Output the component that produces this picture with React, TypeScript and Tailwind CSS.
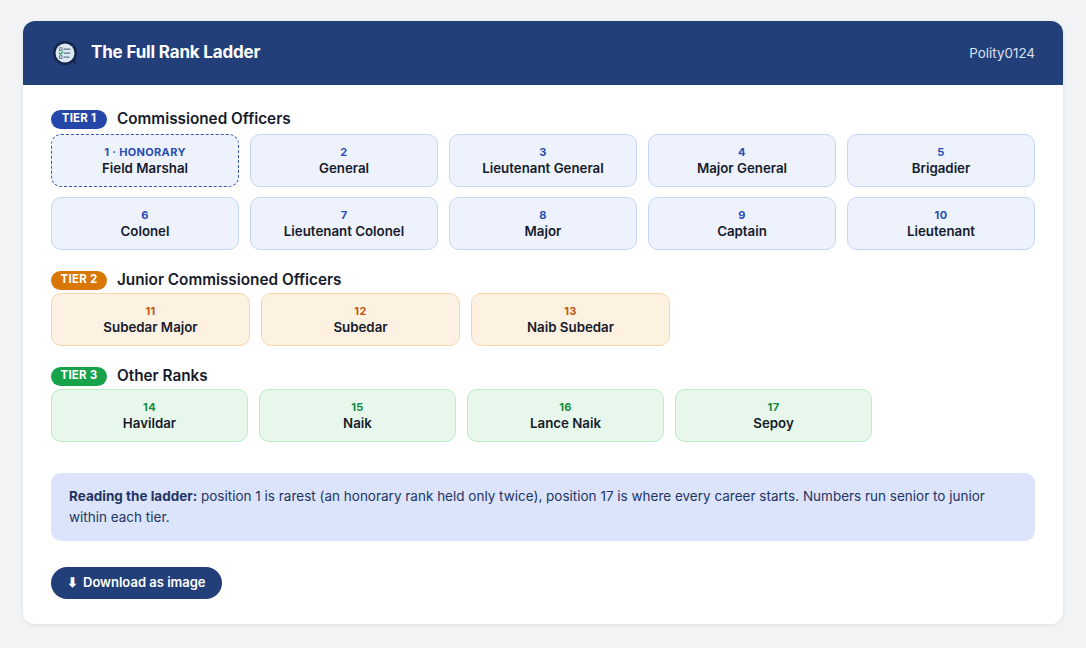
import React from "react";

type Rank = { n: string; name: string; dashed?: boolean };

const tier1: Rank[] = [
  { n: "1 · HONORARY", name: "Field Marshal", dashed: true },
  { n: "2", name: "General" },
  { n: "3", name: "Lieutenant General" },
  { n: "4", name: "Major General" },
  { n: "5", name: "Brigadier" },
  { n: "6", name: "Colonel" },
  { n: "7", name: "Lieutenant Colonel" },
  { n: "8", name: "Major" },
  { n: "9", name: "Captain" },
  { n: "10", name: "Lieutenant" },
];
const tier2: Rank[] = [
  { n: "11", name: "Subedar Major" },
  { n: "12", name: "Subedar" },
  { n: "13", name: "Naib Subedar" },
];
const tier3: Rank[] = [
  { n: "14", name: "Havildar" },
  { n: "15", name: "Naik" },
  { n: "16", name: "Lance Naik" },
  { n: "17", name: "Sepoy" },
];

function Logo() {
  return (
    <svg width="28" height="28" viewBox="0 0 28 28">
      <path d="M19 20 L26 26.5 L23 19 Z" fill="#14264d" />
      <circle cx="14" cy="14" r="12" fill="#14264d" />
      <circle cx="14" cy="14" r="9.5" fill="#dde7ef" />
      <rect x="8.5" y="8.8" width="2.6" height="2.6" fill="none" stroke="#5f7690" strokeWidth="0.9" />
      <rect x="12.5" y="9.5" width="7" height="1.3" rx="0.6" fill="#5f7690" />
      <path d="M8.3 14 L9.6 15.3 L11.6 12.8" fill="none" stroke="#31a354" strokeWidth="1.3" strokeLinecap="round" strokeLinejoin="round" />
      <rect x="12.5" y="13.4" width="7" height="1.3" rx="0.6" fill="#5f7690" />
      <rect x="8.5" y="16.8" width="2.6" height="2.6" fill="none" stroke="#5f7690" strokeWidth="0.9" />
      <rect x="12.5" y="17.5" width="6" height="1.3" rx="0.6" fill="#5f7690" />
    </svg>
  );
}

function Card({
  r,
  bg,
  border,
  numColor,
  w,
}: {
  r: Rank;
  bg: string;
  border: string;
  numColor: string;
  w?: string;
}) {
  return (
    <div
      className={`${w ?? ""} h-[53px] flex flex-col items-center justify-center rounded-[10px] border ${bg} ${
        r.dashed ? "border-dashed border-[#3a56b0]" : border
      }`}
    >
      <div className={`text-[11px] leading-[14px] font-bold tracking-[0.03em] ${numColor}`}>{r.n}</div>
      <div className="text-[13.3px] leading-[18px] font-semibold text-[#161b2b]">{r.name}</div>
    </div>
  );
}

function TierHeader({ badge, badgeBg, title }: { badge: string; badgeBg: string; title: string }) {
  return (
    <div className="flex items-center gap-[10px] h-[20px]">
      <span
        className={`${badgeBg} text-white text-[11.5px] font-bold leading-none rounded-full w-[56px] h-[19px] flex items-center justify-center tracking-[0.02em]`}
      >
        {badge}
      </span>
      <span className="text-[15.3px] font-semibold text-[#161b2b]">{title}</span>
    </div>
  );
}

export default function App() {
  return (
    <div
      className="min-h-[648px] bg-[#f2f3f5] pt-[21px] px-[23px] pb-[25px]"
      style={{ fontFamily: "Inter, 'Noto Sans', sans-serif" }}
    >
      <div className="bg-white rounded-[12px] overflow-hidden shadow-[0_1px_4px_rgba(0,0,0,0.08)] w-[1040px]">
        <div className="h-[64px] bg-[#233f79] flex items-center justify-between pl-[28px] pr-[28px]">
          <div className="flex items-center gap-[12px]">
            <Logo />
            <span className="text-white text-[17px] font-bold tracking-[-0.01em]">The Full Rank Ladder</span>
          </div>
          <span className="text-[#d9e2f3] text-[13.4px]">Polity0124</span>
        </div>

        <div className="px-[28px] pt-[24px] pb-[25px]">
          <TierHeader badge="TIER 1" badgeBg="bg-[#2447a9]" title="Commissioned Officers" />
          <div className="grid grid-cols-5 gap-x-[11px] gap-y-[10px] mt-[5px]">
            {tier1.map((r) => (
              <Card
                key={r.n}
                r={r}
                bg="bg-[#edf2fc]"
                border="border-[#c5d5f4]"
                numColor="text-[#2a4db3]"
              />
            ))}
          </div>

          <div className="mt-[20px]">
            <TierHeader badge="TIER 2" badgeBg="bg-[#d97706]" title="Junior Commissioned Officers" />
            <div className="flex gap-[11px] mt-[3px]">
              {tier2.map((r) => (
                <Card
                  key={r.n}
                  r={r}
                  w="w-[199px]"
                  bg="bg-[#fdf1e1]"
                  border="border-[#f5d8aa]"
                  numColor="text-[#c2570c]"
                />
              ))}
            </div>
          </div>

          <div className="mt-[20px]">
            <TierHeader badge="TIER 3" badgeBg="bg-[#16a34a]" title="Other Ranks" />
            <div className="flex gap-[11px] mt-[3px]">
              {tier3.map((r) => (
                <Card
                  key={r.n}
                  r={r}
                  w="w-[197px]"
                  bg="bg-[#e7f7ec]"
                  border="border-[#bde9c9]"
                  numColor="text-[#168a3e]"
                />
              ))}
            </div>
          </div>

          <div className="mt-[31px] bg-[#dbe4fa] rounded-[10px] px-[18px] py-[13px] text-[13.5px] leading-[21px] text-[#1f3564]">
            <span className="font-bold">Reading the ladder:</span> position 1 is rarest (an honorary rank held only
            twice), position 17 is where every career starts. Numbers run senior to junior within each tier.
          </div>

          <button className="mt-[26px] h-[32px] px-[16px] rounded-full bg-[#233f79] text-white text-[13px] font-semibold flex items-center gap-[5px]">
            <span>⬇</span>
            <span>Download as image</span>
          </button>
        </div>
      </div>
    </div>
  );
}
